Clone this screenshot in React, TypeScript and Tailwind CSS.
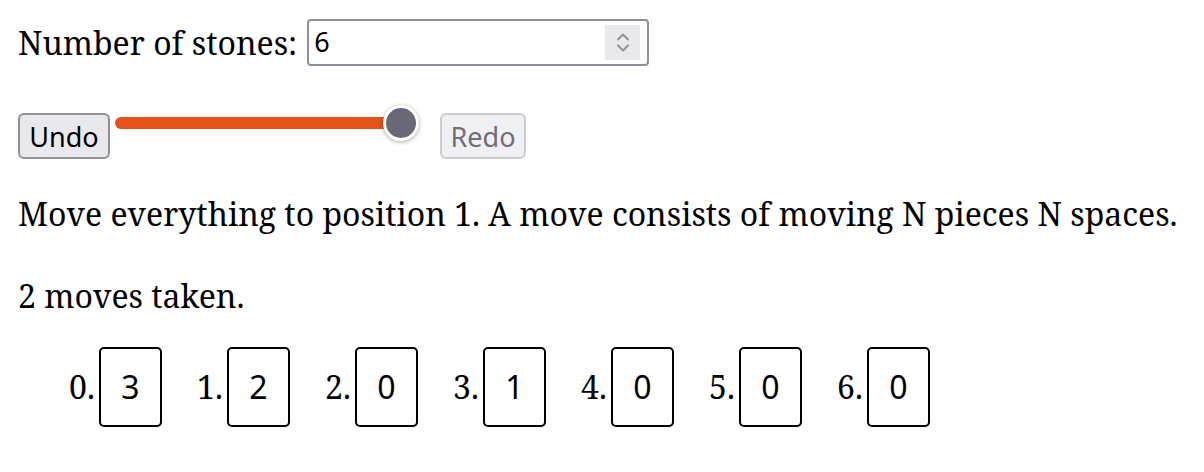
import { useState } from 'react';

const serif = "font-['Noto_Serif','DejaVu_Serif',serif]";
const sans = "font-['Noto_Sans','Open_Sans',sans-serif]";

function Spinner() {
  return (
    <div className="ml-auto mr-[7px] flex h-[35px] w-[35px] flex-col items-center justify-center gap-[3px] bg-[#e9e9ed]">
      <svg width="14" height="9" viewBox="0 0 14 9" fill="none">
        <path d="M2 7.5 7 2.5l5 5" stroke="#8f8f9d" strokeWidth="2" strokeLinecap="round" strokeLinejoin="round" />
      </svg>
      <svg width="14" height="9" viewBox="0 0 14 9" fill="none">
        <path d="M2 1.5 7 6.5l5-5" stroke="#8f8f9d" strokeWidth="2" strokeLinecap="round" strokeLinejoin="round" />
      </svg>
    </div>
  );
}

export default function App() {
  const [stones] = useState(6);
  const piles = [3, 2, 0, 1, 0, 0, 0];
  const moves = 2;

  return (
    <div className={`${serif} min-h-[472px] bg-white pl-[18px] pt-[19px] text-[32px] text-black`}>
      {/* Stones input */}
      <div className="flex items-center">
        <span className="mr-[10px] leading-none">Number of stones:</span>
        <div className={`${sans} flex h-[47px] w-[342px] items-center rounded-[4px] border-2 border-[#8f8f9d] bg-white pl-[5px] text-[27px]`}>
          <span>{stones}</span>
          <Spinner />
        </div>
      </div>

      {/* History controls */}
      <div className={`${sans} mt-[47px] flex items-start text-[27px]`}>
        <button className="flex h-[46px] w-[92px] items-center justify-center rounded-[6px] border-2 border-[#8f8f9d] bg-[#e9e9ed] pt-[2px] text-black">
          Undo
        </button>
        <div className="relative ml-[5px] mt-[4px] h-[12px] w-[320px]">
          <div className="h-full w-[290px] rounded-full bg-[#e5531a]" />
          <div className="absolute left-[268px] top-[-12px] h-[36px] w-[36px] rounded-full border-[3px] border-white bg-[#686876] shadow-[0_1px_4px_rgba(0,0,0,0.35)]" />
        </div>
        <button disabled className="ml-[5px] flex h-[46px] w-[86px] items-center justify-center rounded-[6px] border-2 border-[#cbcbd2] bg-[#f0f0f4] pt-[2px] text-[#6e6e76]">
          Redo
        </button>
      </div>

      <p className="mt-[39px] leading-none">Move everything to position 1. A move consists of moving N pieces N spaces.</p>
      <p className="mt-[50px] leading-none">{moves} moves taken.</p>

      {/* Piles */}
      <div className="mt-[35px] flex pl-[44px]">
        {piles.map((count, i) => (
          <div key={i} className="mr-[28px] flex items-center">
            <span className="mr-[4px] w-[33px] text-right">{i}.</span>
            <div className={`${sans} flex h-[80px] w-[63px] items-center justify-center rounded-[5px] border-2 border-black text-[32px]`}>
              {count}
            </div>
          </div>
        ))}
      </div>
    </div>
  );
}
